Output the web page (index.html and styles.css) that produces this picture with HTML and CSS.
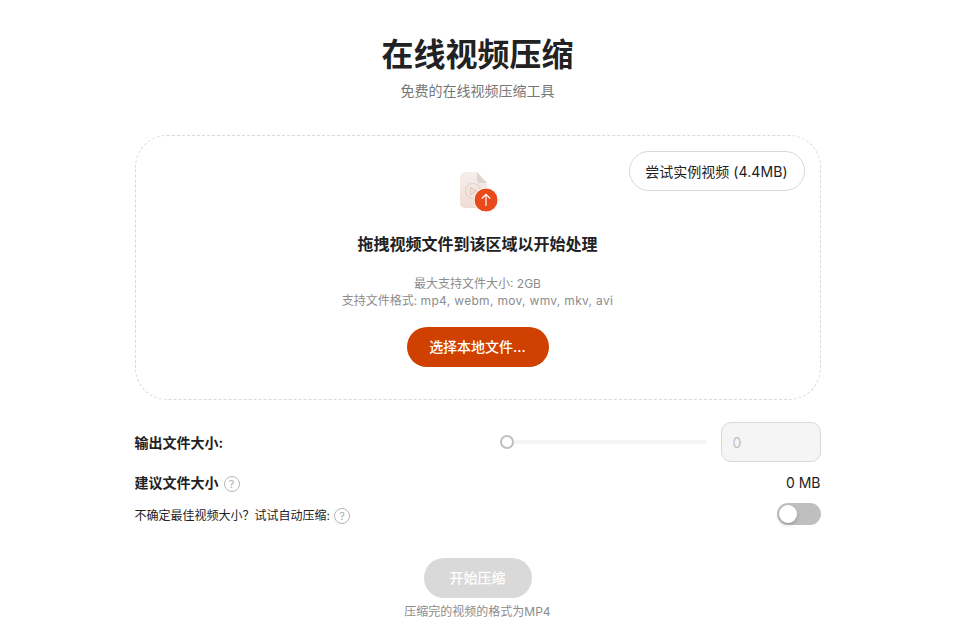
FILE: index.html
```html
<!DOCTYPE html>
<html lang="zh-CN">
<head>
    <meta charset="UTF-8">
    <title>在线视频压缩</title>
    <link rel="stylesheet" href="styles.css">
</head>
<body>
    <div class="container">
        <div class="page-head">
            <h1>在线视频压缩</h1>
            <p>免费的在线视频压缩工具</p>
        </div>

        <div class="dropzone">
            <button type="button" class="sample-btn">尝试实例视频 <span class="sample-size">(4.4MB)</span></button>
            <div class="file-icon">
                <svg width="40" height="46" viewBox="0 0 40 46">
                    <defs>
                        <linearGradient id="sheet" x1="0" y1="0" x2="0" y2="1">
                            <stop offset="0" stop-color="#f5efec"/>
                            <stop offset="1" stop-color="#f0dcd4"/>
                        </linearGradient>
                    </defs>
                    <path d="M6 1h12l10 11v20a5 5 0 0 1-5 5H6a5 5 0 0 1-5-5V6a5 5 0 0 1 5-5z" fill="url(#sheet)"/>
                    <path d="M18 1l10 11h-7a3 3 0 0 1-3-3z" fill="#e0d4d0"/>
                    <circle cx="14" cy="20" r="7.500" fill="none" stroke="#e3d0c8" stroke-width="1.200"/>
                    <path d="M11.500 16.500l5.500 3.500-5.500 3.500z" fill="none" stroke="#dcc8bf" stroke-width="1.200"/>
                    <circle cx="27" cy="29" r="12" fill="#e84a1c" stroke="#fff" stroke-width="1"/>
                    <path d="M27 35v-11.500M22.800 27.500l4.200-4.200 4.200 4.200" fill="none" stroke="#fff" stroke-width="1.200"/>
                </svg>
            </div>
            <div class="drop-title">拖拽视频文件到该区域以开始处理</div>
            <div class="drop-info">
                <div>最大支持文件大小: 2GB</div>
                <div>支持文件格式: <span class="formats">mp4, webm, mov, wmv, mkv, avi</span></div>
            </div>
            <button type="button" class="choose-btn">选择本地文件...</button>
        </div>

        <div class="size-row">
            <label class="row-title">输出文件大小:</label>
            <div class="size-control">
                <div class="slider">
                    <span class="slider-thumb"></span>
                </div>
                <input type="text" class="size-input" placeholder="0" disabled>
            </div>
        </div>

        <div class="suggest-row">
            <span class="row-title">建议文件大小 <span class="help">?</span></span>
            <span class="suggest-value">0 MB</span>
        </div>

        <div class="auto-row">
            <span class="auto-label">不确定最佳视频大小？试试自动压缩: <span class="help">?</span></span>
            <span class="switch"><span class="switch-knob"></span></span>
        </div>

        <div class="footer">
            <button type="button" class="start-btn" disabled>开始压缩</button>
            <p>压缩完的视频的格式为MP4</p>
        </div>
    </div>
</body>
</html>
```

FILE: styles.css
```css
body {
    font-family: "Inter", "Noto Sans CJK SC", sans-serif;
    color: #222;
    background-color: #fff;
    margin: 0;
}

button {
    font-family: inherit;
}

.container {
    width: 686px;
    margin-left: 134.5px;
    padding-top: 32px;
}

.page-head {
    text-align: center;
    height: 103px;
}

.page-head h1 {
    font-size: 32px;
    line-height: 46px;
    font-weight: 700;
    margin: 0;
    color: #222;
}

.page-head p {
    font-size: 14px;
    line-height: 22px;
    margin: 2px 0 0;
    color: #777;
}

.dropzone {
    position: relative;
    height: 265px;
    box-sizing: border-box;
    border: 1px dashed #d9d9d9;
    border-radius: 32px;
    padding-top: 35px;
    display: flex;
    flex-direction: column;
    align-items: center;
}

.sample-btn {
    position: absolute;
    top: 15px;
    right: 15px;
    height: 40px;
    width: 176px;
    padding: 0;
    font-size: 14px;
    color: #222;
    background-color: #fff;
    border: 1px solid #d9d9d9;
    border-radius: 20px;
}

.sample-size {
    letter-spacing: 0.1px;
}

.file-icon {
    height: 46px;
    width: 40px;
    margin-left: 2px;
}

.drop-title {
    font-size: 16px;
    line-height: 22px;
    font-weight: 700;
    margin-top: 16px;
}

.drop-info {
    font-size: 12px;
    line-height: 17px;
    color: #8c8c8c;
    text-align: center;
    margin-top: 20px;
}

.formats {
    letter-spacing: 0.32px;
}

.choose-btn {
    width: 142px;
    height: 40px;
    margin-top: 18px;
    padding: 0 0 2px;
    font-size: 14px;
    font-weight: 500;
    color: #fff;
    background-color: #d04000;
    border: none;
    border-radius: 20px;
}

.size-row {
    display: flex;
    justify-content: space-between;
    align-items: center;
    margin-top: 22px;
    height: 40px;
}

.row-title {
    font-size: 14px;
    font-weight: 700;
    display: flex;
    align-items: center;
    gap: 6px;
}

.size-control {
    display: flex;
    align-items: center;
    gap: 14px;
}

.slider {
    position: relative;
    width: 200px;
    height: 4px;
    background-color: #f5f5f5;
    border-radius: 2px;
}

.slider-thumb {
    position: absolute;
    left: -7px;
    top: -5px;
    width: 14px;
    height: 14px;
    box-sizing: border-box;
    background-color: #fff;
    border: 2px solid #bfbfbf;
    border-radius: 50%;
}

.size-input {
    width: 100px;
    height: 40px;
    box-sizing: border-box;
    padding: 0 11px;
    font-family: inherit;
    font-size: 14px;
    background-color: #f5f5f5;
    border: 1px solid #d9d9d9;
    border-radius: 10px;
}

.size-input::placeholder {
    color: #bfbfbf;
}

.suggest-row {
    display: flex;
    justify-content: space-between;
    align-items: center;
    margin-top: 9px;
    height: 22px;
}

.suggest-value {
    font-size: 14px;
}

.help {
    display: inline-flex;
    align-items: center;
    justify-content: center;
    width: 14px;
    height: 14px;
    margin: 3px 0 0 -1px;
    font-size: 11px;
    font-weight: 400;
    color: #aaa;
    border: 1px solid #b5b5b5;
    border-radius: 50%;
}

.auto-row {
    display: flex;
    justify-content: space-between;
    align-items: center;
    margin-top: 10px;
    height: 22px;
}

.auto-label {
    font-size: 12px;
    color: #222;
    display: flex;
    align-items: center;
    gap: 5px;
}

.switch {
    display: block;
    width: 44px;
    height: 22px;
    background-color: #bfbfbf;
    border-radius: 11px;
    padding: 2px;
    box-sizing: border-box;
}

.switch-knob {
    display: block;
    width: 18px;
    height: 18px;
    background-color: #fff;
    border-radius: 50%;
    box-shadow: 0 2px 4px rgba(0, 35, 11, 0.2);
}

.footer {
    text-align: center;
    margin-top: 33px;
}

.start-btn {
    width: 108px;
    height: 40px;
    padding: 0 0 2px;
    font-size: 14px;
    font-weight: 500;
    color: #fff;
    background-color: #d9d9d9;
    border: none;
    border-radius: 20px;
    display: block;
    margin: 0 auto;
}

.footer p {
    font-size: 12px;
    line-height: 18px;
    color: #8c8c8c;
    margin: 5px 0 0;
}
```
